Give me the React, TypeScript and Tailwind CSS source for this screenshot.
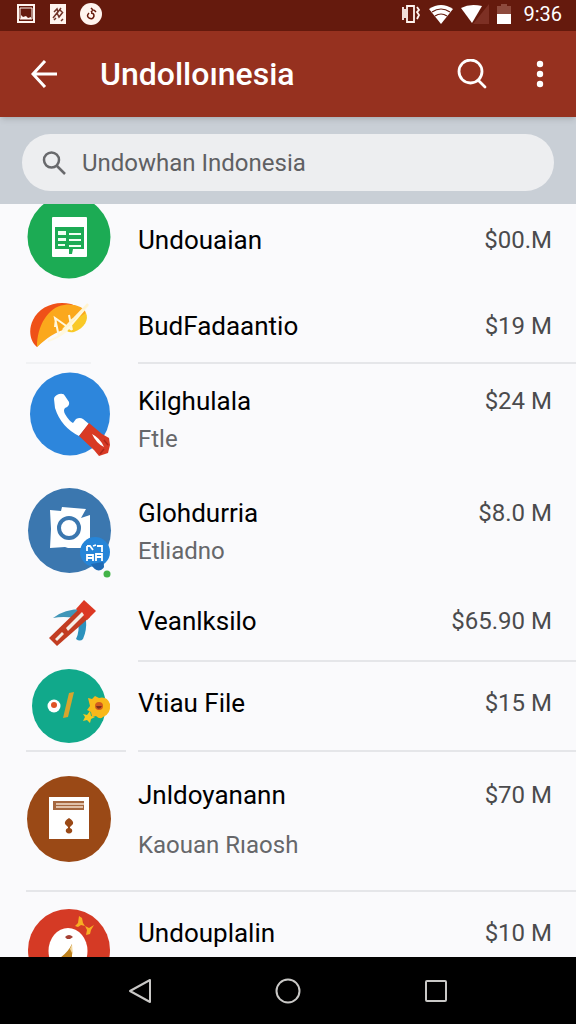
import type { ReactNode } from 'react'

type Item = {
  name: string
  detail?: string
  price: string
  icon: ReactNode
  iconClass: string
  textClass: string
  detailClass?: string
  rowClass?: string
}

function SheetIcon() {
  return (
    <svg width="100" height="84" viewBox="0 0 100 84" aria-hidden="true">
      <circle cx="43" cy="42" r="41.5" fill="#1cab54" />
      <rect x="26" y="22" width="35" height="40" rx="1" fill="#fff" />
      <rect x="29" y="32" width="29" height="22" fill="#1cab54" />
      <path d="M32 36h8v4h-8zM43 38h12v2H43zM32 43h8v3h-8zM43 44h12v2H43zM32 49h7v2h-7zM43 50h12v2H43z" fill="#f1fff2" />
      <path d="M43 54h4l-1 5h-3z" fill="#1cab54" />
    </svg>
  )
}

function FanIcon() {
  return (
    <svg width="65" height="50" viewBox="0 0 65 50" aria-hidden="true">
      <path d="M11 46C4 40 2 29 7 19 13 6 29-1 45 3L52 6 30 25z" fill="#ef5118" />
      <path d="M11 46C11 25 22 6 38 4c11-2 22 3 22 9-1 8-9 12-17 14C28 31 20 38 11 46z" fill="#fba81c" />
      <path d="M60 12c3 6-1 15-12 19-5 1-9-1-11-5z" fill="#f9c928" />
      <path d="M22 40Q32 37 40 30L62 4M33 36l-4-19 17 12M30 17l-1 9M43 14l3 15M34 34l13-16" fill="none" stroke="#fff8df" strokeWidth="2" />
      <path d="M37 29 62 3" stroke="#fff4d2" strokeWidth="2.500" />
    </svg>
  )
}

function PhoneIcon() {
  return (
    <svg width="100" height="85" viewBox="0 0 100 85" aria-hidden="true">
      <ellipse cx="44" cy="42" rx="40" ry="41.5" fill="#2d86dc" />
      <path d="M28 27q0-3 5-5 5-1 6 2l4 6q1 4-4 6-2 2 0 6 4 7 8 9l3-4q4-2 7 0l6 5-10 12Q35 55 29 36z" fill="#fff" />
      <path d="M63 51 76 62l7 4 1 7-2 8-9 3-5-6-15-14z" fill="#d83a25" />
      <path d="M66 62q8 4 12 13-8-4-12-13z" fill="#fff" />
      <path d="M78 68l4 5M74 82l4-5" stroke="#ad2719" strokeWidth="1.5" />
    </svg>
  )
}

function CameraIcon() {
  return (
    <svg width="100" height="90" viewBox="0 0 100 90" aria-hidden="true">
      <ellipse cx="43.500" cy="42.500" rx="41.500" ry="42.500" fill="#3b77af" />
      <path d="M24 22l11 1 1-4 24 2-5 9 9-3v33H42l-3-1-15 1 1-19z" fill="#fff" />
      <circle cx="43" cy="40" r="10" fill="#fff" stroke="#3b77af" strokeWidth="4" />
      <circle cx="69" cy="64" r="15" fill="#2685d8" />
      <path d="M65 76q4 8 10 6 5-3 2-8z" fill="#1f69b4" />
      <path d="M61 58h3l3 4M61 58v5M71 58h5v6M67 58l3-1M61 73v-6h6v6M61 70h6M70 73v-7h6v7M70 69h6" fill="none" stroke="#fff" strokeWidth="1.800" />
      <circle cx="81" cy="86" r="3.500" fill="#43b348" />
    </svg>
  )
}

function ToolIcon() {
  return (
    <svg width="100" height="48" viewBox="0 0 100 48" aria-hidden="true">
      <path d="M27 18Q38 9 57 9l-8 9q-12-2-22 0z" fill="#4096b8" />
      <path d="M52 20q6-3 8 0 1 10-3 19-3 3-7 0 4-8 2-19z" fill="#2c92bd" />
      <path d="M23 38 54 8l10 9-33 29z" fill="#c23d22" />
      <path d="M58 0 70 11l-9 9-11-11z" fill="#dc3823" />
      <path d="M40 28 56 12l2 3-16 16zM29 39l7-7 2 2-7 7z" fill="#f5eee6" />
    </svg>
  )
}

function FlowerIcon() {
  return (
    <svg width="100" height="76" viewBox="0 0 100 76" aria-hidden="true">
      <circle cx="43" cy="38" r="37" fill="#11a98b" />
      <circle cx="28" cy="38" r="6.500" fill="#fff" />
      <circle cx="28" cy="37" r="3" fill="#df5426" />
      <path d="M43 25l5-1-6 25-5 1z" fill="#d8a52d" />
      <path d="M62 30l4 1 3-3 4 2q8-2 11 6 1 10-7 13-3 3-7-1l-4 1-1-5-4-2 3-4z" fill="#f9b81a" />
      <path d="M57 46l4 1 3-4 1 5 4 1-4 2-1 4-3-3-4 1 2-4z" fill="#f3cb23" />
      <circle cx="73" cy="38" r="4" fill="#d35c1e" />
      <path d="M70 38h6q-2 4-5 2z" fill="#7c301c" />
    </svg>
  )
}

function BoxIcon() {
  return (
    <svg width="100" height="88" viewBox="0 0 100 88" aria-hidden="true">
      <ellipse cx="43" cy="43" rx="42" ry="43" fill="#9a4916" />
      <rect x="23" y="21" width="40" height="42" fill="#fff" />
      <rect x="27" y="25" width="31" height="9" fill="#a5673f" />
      <path d="M30 28h28M30 31h27" stroke="#f4dfcd" strokeWidth="1.500" />
      <path d="M43 42q5 3 4 6l-3 3v1q3 1 2 4-3 3-6 0-1-3 2-4v-1l-3-3q-1-3 4-6z" fill="#9a4916" />
    </svg>
  )
}

function BadgeIcon() {
  return (
    <svg width="100" height="84" viewBox="0 0 100 84" aria-hidden="true">
      <circle cx="43" cy="42" r="41" fill="#d53a25" />
      <ellipse cx="42" cy="43" rx="19.500" ry="23" fill="#fff" />
      <path d="M39 29q4-4 8 0l-3 2h-3z" fill="#a64033" />
      <path d="M46 36v15H32q9-5 14-15z" fill="#bd811e" />
      <path d="M44 41l2-5 1 11z" fill="#f2d7a0" />
      <path d="M49 18l3-3 1-7 3 2 1 5 2 3-4-1-3 2zM59 18l4 2 5-3-3 5-1 4-4 1 1-5z" fill="#f8ae23" />
    </svg>
  )
}

const items: Item[] = [
  { name: 'Undouaian', price: '$00.M', icon: <SheetIcon />, iconClass: 'pb-2', textClass: 'pt-[26px]' },
  {
    name: 'BudFadaantio',
    price: '$19 M',
    icon: <FanIcon />,
    iconClass: 'w-[65px] border-b-2 border-[#f1f2f4] pt-[14px]',
    textClass: 'border-b-2 border-[#e5e6e9] pt-5 pb-[17px]',
  },
  {
    name: 'Kilghulala',
    detail: 'Ftle',
    price: '$24 M',
    icon: <PhoneIcon />,
    iconClass: 'pt-2 pb-5',
    textClass: 'pt-[18px]',
  },
  {
    name: 'Glohdurria',
    detail: 'Etliadno',
    price: '$8.0 M',
    icon: <CameraIcon />,
    iconClass: 'pt-[11px] pb-3',
    textClass: 'pt-[17px]',
  },
  {
    name: 'Veanlksilo',
    price: '$65.90 M',
    icon: <ToolIcon />,
    iconClass: 'pt-[10px]',
    textClass: 'border-b-2 border-[#e5e6e9] pt-[12px] pb-5',
  },
  {
    name: 'Vtiau File',
    price: '$15 M',
    icon: <FlowerIcon />,
    iconClass: 'border-b-2 border-[#e5e6e9] pt-[6px]',
    textClass: 'border-b-2 border-[#e5e6e9] pt-[22px] pb-7',
  },
  {
    name: 'Jnldoyanann',
    detail: 'Kaouan Rıaosh',
    price: '$70 M',
    icon: <BoxIcon />,
    iconClass: 'pt-6',
    textClass: 'pt-6 pb-[26px]',
    detailClass: 'mt-3',
    rowClass: 'border-b-2 border-[#e5e6e9]',
  },
  { name: 'Undouplalin', price: '$10 M', icon: <BadgeIcon />, iconClass: 'pt-4', textClass: 'pt-[22px]' },
]

function ListRow({ item }: { item: Item }) {
  return (
    <li className={`ml-[26px] flex gap-3 ${item.rowClass ?? ''}`}>
      <div className="flex w-[100px] shrink-0">
        <div className={item.iconClass}>{item.icon}</div>
      </div>
      <div className={`flex min-w-0 flex-1 items-start justify-between pr-6 leading-[38px] ${item.textClass}`}>
        <div>
          <h2 className="text-[26px] leading-[38px] text-black">{item.name}</h2>
          {item.detail && (
            <p className={`text-[24px] leading-[38px] text-[#66676a] ${item.detailClass ?? ''}`}>{item.detail}</p>
          )}
        </div>
        <span className="text-[24px] leading-[38px] text-[#4b4b4d]">{item.price}</span>
      </div>
    </li>
  )
}

function StatusBar() {
  return (
    <div className="flex h-[31px] shrink-0 items-center justify-between bg-[#651a0d] pr-[14px] pl-4 text-white">
      <div className="flex items-center gap-3 pb-1">
        <svg width="20" height="20" viewBox="0 0 20 20" fill="none" aria-hidden="true">
          <path d="M2 1h16v17H2z" stroke="#fff4ef" strokeWidth="2" />
          <path d="M4 4h12v11H4z" stroke="#fff4ef" strokeWidth="1" />
          <path d="M5 15v-4l2 2 3-1 2 2 3-1v2z" fill="#fff4ef" />
        </svg>
        <svg width="20" height="22" viewBox="0 0 20 22" aria-hidden="true">
          <path d="M2 1h16v20H2z" fill="#fff4ef" />
          <path d="M6 9l3-3 1 3 3-4M5 15l4-5 2 4 4-5M6 17l2-2M13 18l2-2M12 7l3 3" fill="none" stroke="#713429" strokeWidth="1.500" />
        </svg>
        <svg width="22" height="22" viewBox="0 0 22 22" aria-hidden="true">
          <circle cx="11" cy="11" r="11" fill="#fff4ef" />
          <path d="M9 10q-3 3 0 5 4 2 5-2 0-3-3-3M11 5l2 2-2 2M14 7l2 2" fill="none" stroke="#651a0d" strokeWidth="1.500" />
        </svg>
      </div>
      <div className="flex items-center gap-2 pb-1">
        <svg width="20" height="20" viewBox="0 0 20 20" fill="none" stroke="#fff4ef" strokeWidth="1.800" aria-hidden="true">
          <path d="M6 2h7v16H6zM2 3v13M4 5v9M16 3l2 3-2 2 2 3-2 4" />
        </svg>
        <svg width="24" height="20" viewBox="0 0 24 20" aria-hidden="true">
          <path d="M0 5Q12-3 24 5L12 20z" fill="#fff" />
          <path d="M3 8q9-6 18 0M6 12q6-4 12 0" fill="none" stroke="#651a0d" strokeWidth="1.200" />
        </svg>
        <svg width="28" height="20" viewBox="0 0 28 20" aria-hidden="true">
          <path d="M28 0v20H12z" fill="#7d3024" />
          <path d="M0 4Q9-1 21 2L11 19z" fill="#fff" />
        </svg>
        <svg width="14" height="20" viewBox="0 0 14 20" aria-hidden="true">
          <path d="M4 0h6v2h4v8H0V2h4z" fill="#8d4a3d" />
          <path d="M0 10h14v10H0z" fill="#fff" />
        </svg>
        <span className="ml-1 text-[20px] leading-6">9:36</span>
      </div>
    </div>
  )
}

export default function App() {
  return (
    <div className="flex h-screen flex-col overflow-hidden bg-[#fafafc] font-['Roboto',sans-serif]">
      <StatusBar />

      <header className="relative flex h-[86px] shrink-0 items-center bg-[#96311f] pr-4 pl-6 text-white shadow-md">
        <button type="button" aria-label="Back" className="flex size-10 items-center justify-center">
          <svg width="26" height="28" viewBox="0 0 26 28" fill="none" stroke="currentColor" strokeWidth="3" aria-hidden="true">
            <path d="M26 14H2M14 1 2 14l12 13" />
          </svg>
        </button>
        <h1 className="ml-9 flex-1 text-[32px] leading-10 font-medium">Undolloınesia</h1>
        <button type="button" aria-label="Search" className="flex size-10 items-center justify-center">
          <svg width="30" height="30" viewBox="0 0 30 30" fill="none" stroke="currentColor" strokeWidth="2.800" strokeLinecap="round" aria-hidden="true">
            <circle cx="13.500" cy="12.500" r="11.500" />
            <path d="m21 21 7 7" />
          </svg>
        </button>
        <button type="button" aria-label="More options" className="ml-7 flex size-10 items-center justify-center">
          <svg width="8" height="28" viewBox="0 0 8 28" fill="currentColor" aria-hidden="true">
            <circle cx="4" cy="4" r="3.200" />
            <circle cx="4" cy="14" r="3.200" />
            <circle cx="4" cy="24" r="3.200" />
          </svg>
        </button>
      </header>

      <div className="shrink-0 bg-[#c9cfd6] px-[22px] pt-[17px] pb-[13px]">
        <label className="flex h-[57px] items-center gap-4 rounded-full bg-[#edeef0] px-5">
          <svg width="24" height="24" viewBox="0 0 24 24" fill="none" stroke="#68696c" strokeWidth="2.500" aria-hidden="true">
            <circle cx="9.500" cy="9" r="7.500" />
            <path d="m15 15 8 8" />
          </svg>
          <input
            type="text"
            aria-label="Search list"
            placeholder="Undowhan Indonesia"
            className="min-w-0 flex-1 bg-transparent text-[24px] leading-8 text-[#5f6063] outline-none placeholder:text-[#5f6063]"
          />
        </label>
      </div>

      <main className="min-h-0 flex-1 overflow-hidden">
        <ul className="-mt-[9px]">
          {items.map((item) => (
            <ListRow key={item.name} item={item} />
          ))}
        </ul>
      </main>

      <nav className="flex h-[67px] shrink-0 items-center justify-center gap-[108px] bg-black text-[#c9c8c6]">
        <button type="button" aria-label="Back" className="flex size-10 items-center justify-center">
          <svg width="24" height="26" viewBox="0 0 24 26" fill="none" stroke="currentColor" strokeWidth="2" strokeLinejoin="round" aria-hidden="true">
            <path d="M22 2v22L2 13z" />
          </svg>
        </button>
        <button type="button" aria-label="Home" className="flex size-10 items-center justify-center">
          <svg width="26" height="26" viewBox="0 0 26 26" fill="none" stroke="currentColor" strokeWidth="2" aria-hidden="true">
            <circle cx="13" cy="13" r="11.500" />
          </svg>
        </button>
        <button type="button" aria-label="Overview" className="flex size-10 items-center justify-center">
          <svg width="22" height="22" viewBox="0 0 22 22" fill="none" stroke="currentColor" strokeWidth="2" aria-hidden="true">
            <rect x="1" y="1" width="20" height="20" rx="1" />
          </svg>
        </button>
      </nav>
    </div>
  )
}
